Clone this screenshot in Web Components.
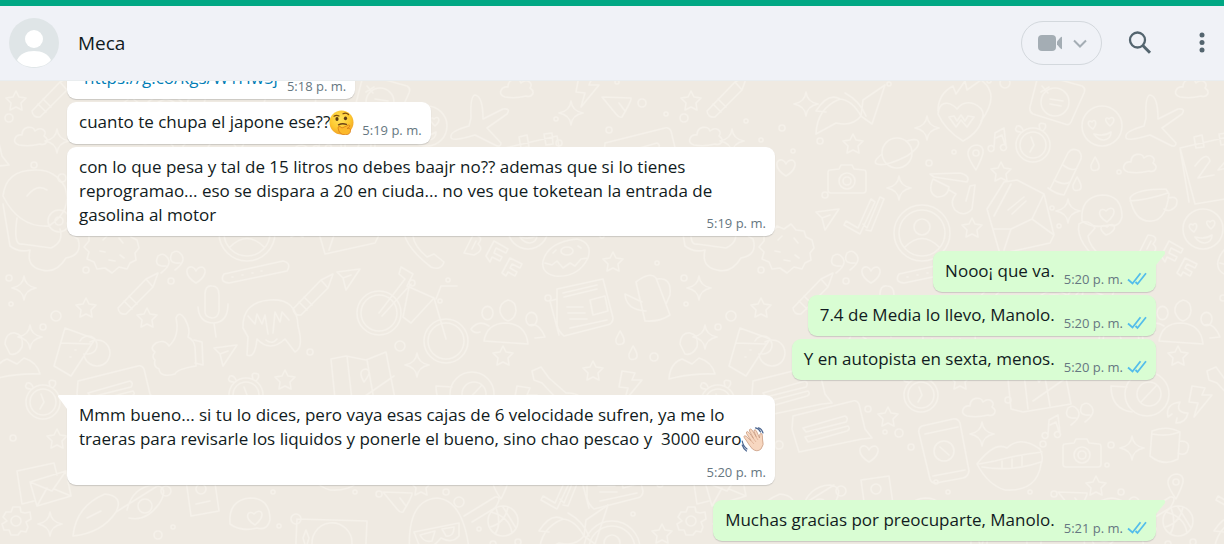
<!DOCTYPE html>
<html lang="es">
<head>
<meta charset="utf-8">
<title>Meca</title>
<style>
html,body{height:100%}
body{margin:0;font-family:"Open Sans","Noto Sans",sans-serif;color:#111b21;overflow:hidden}
</style>
</head>
<body>
<chat-window>
  <chat-header slot="header" name="Meca"></chat-header>
  <chat-message time="5:18 p. m."><a class="preview-link" href="#" style="color:#027eb5;text-decoration:none;margin-left:5px">https://g.co/kgs/W1Hw5j</a></chat-message>
  <chat-message time="5:19 p. m.">cuanto te chupa el japone ese??<chat-emoji name="thinking"></chat-emoji></chat-message>
  <chat-message time="5:19 p. m.">con lo que pesa y tal de 15 litros no debes baajr no?? ademas que si lo tienes reprogramao... eso se dispara a 20 en ciuda... no ves que toketean la entrada de gasolina al motor</chat-message>
  <chat-message out tail time="5:20 p. m.">Nooo¡ que va.</chat-message>
  <chat-message out time="5:20 p. m.">7.4 de Media lo llevo, Manolo.</chat-message>
  <chat-message out time="5:20 p. m.">Y en autopista en sexta, menos.</chat-message>
  <chat-message tail time="5:20 p. m.">Mmm bueno... si tu lo dices, pero vaya esas cajas de 6 velocidade sufren, ya me lo traeras para revisarle los liquidos y ponerle el bueno, sino chao pescao y  3000 euro<chat-emoji name="wave"></chat-emoji></chat-message>
  <chat-message out tail time="5:21 p. m.">Muchas gracias por preocuparte, Manolo.</chat-message>
</chat-window>
<script>
class ShadowElement extends HTMLElement {
  connectedCallback() {
    if (!this.shadowRoot) this.attachShadow({mode: 'open'}).innerHTML = this.render();
  }
}

customElements.define('chat-window', class extends ShadowElement {
  render() {
    return `<style>
      :host{display:flex;flex-direction:column;height:100vh;border-top:6px solid #00a884;box-sizing:border-box}
      main{position:relative;flex:1;min-height:0;overflow:hidden;background:#efeae2;display:flex}
      chat-wallpaper{position:absolute;inset:0}
      section{position:relative;flex:1;min-width:0;display:flex;flex-direction:column;justify-content:flex-end;gap:3px;padding:0 68px 3px 67px}
    </style>
    <slot name="header"></slot>
    <main><chat-wallpaper></chat-wallpaper><section><slot></slot></section></main>`;
  }
});

customElements.define('chat-header', class extends ShadowElement {
  render() {
    return `<style>
      :host{display:block;background:#f0f2f7;border-bottom:1px solid #e9edef}
      header{display:flex;align-items:center;height:74px;padding:0 7px 0 9px}
      h1{flex:1;margin:0 0 0 19px;font-size:19px;font-weight:400;line-height:26px}
      button{display:flex;align-items:center;justify-content:center;border:0;background:none;padding:0;color:#54656f}
      .call{width:81px;height:44px;box-sizing:border-box;border:1px solid #d3d8dd;border-radius:22px;color:#a4adb4;gap:10px;margin-right:23px}
      .search{margin-right:32px}
      svg{display:block}
    </style>
    <header>
      <svg width="50" height="50" viewBox="0 0 50 50" role="img" aria-label="Foto de perfil"><defs><clipPath id="c"><circle cx="25" cy="25" r="25"/></clipPath></defs><g clip-path="url(#c)"><rect width="50" height="50" fill="#dfe5e7"/><circle cx="25" cy="21" r="9" fill="#fff"/><path d="M8 42C11 36 17 33 25 33S39 36 42 42C38 47 32 49 25 49S12 47 8 42Z" fill="#fff"/></g></svg>
      <h1>${this.getAttribute('name')}</h1>
      <button class="call" aria-label="Videollamada">
        <svg width="26" height="18" viewBox="0 0 26 18" fill="currentColor"><rect x="1" y="1" width="18" height="16" rx="4"/><path d="M20 7.500L23 4Q25 2 25 3.500V14.500Q25 16 23 14L20 10.500Z"/></svg>
        <svg width="14" height="9" viewBox="0 0 14 9" fill="none" stroke="currentColor" stroke-width="2"><path d="M1 1.500L7 7.500L13 1.500"/></svg>
      </button>
      <button class="search" aria-label="Buscar"><svg width="30" height="30" viewBox="0 0 30 30" fill="none" stroke="currentColor"><circle cx="12.500" cy="12" r="7.500" stroke-width="2.300"/><path d="M17.800 17.500L25 24.700" stroke-width="3"/></svg></button>
      <button aria-label="Menú"><svg width="30" height="30" viewBox="0 0 30 30" fill="currentColor"><circle cx="15" cy="7" r="2.500"/><circle cx="15" cy="14.500" r="2.500"/><circle cx="15" cy="22" r="2.500"/></svg></button>
    </header>`;
  }
});

customElements.define('chat-message', class extends ShadowElement {
  render() {
    const out = this.hasAttribute('out');
    const tail = out ? 'M0 0H8Q10 1 9 3L0 14Z' : 'M9 0H1Q-1 1 1 3L9 14Z';
    return `<style>
      :host{display:flex;flex:none;--bubble:#fff}
      :host([out]){justify-content:flex-end;--bubble:#d9fdd3}
      :host([tail]){margin-top:12px}
      .bubble{position:relative;display:flow-root;max-width:65%;box-sizing:border-box;padding:8px 9px 9px 12px;border-radius:9px;background:var(--bubble);box-shadow:0 1px 1px rgba(11,20,26,.16);font-size:17px;line-height:24px;white-space:pre-wrap}
      :host([tail]) .bubble{border-top-left-radius:0}
      :host([out][tail]) .bubble{border-top-left-radius:9px;border-top-right-radius:0}
      .tail{position:absolute;top:0;right:100%;fill:var(--bubble)}
      :host([out]) .tail{right:auto;left:100%}
      .meta{float:right;display:flex;align-items:center;gap:4px;margin:8px 0 -8px 9px;font-size:13px;line-height:24px;color:#667781;white-space:nowrap}
      .ticks{color:#53bdeb}
    </style>
    <div class="bubble">${this.hasAttribute('tail') ? `<svg class="tail" width="9" height="14" viewBox="0 0 9 14" aria-hidden="true"><path d="${tail}"/></svg>` : ''}<slot></slot><span class="meta"><time>${this.getAttribute('time')}</time>${out ? '<svg class="ticks" width="20" height="14" viewBox="0 0 20 14" fill="none" stroke="currentColor" stroke-width="1.800" role="img" aria-label="Leído"><path d="M1 7.500L5.500 11.500L13.500 1.200M8.500 10L10.500 12L19 1.200"/></svg>' : ''}</span></div>`;
  }
});

customElements.define('chat-emoji', class extends ShadowElement {
  render() {
    const art = {
      thinking: `<defs><radialGradient id="g" cx=".45" cy=".35" r=".7"><stop offset="0" stop-color="#ffe45c"/><stop offset=".6" stop-color="#fdc82f"/><stop offset="1" stop-color="#ee9a25"/></radialGradient></defs>
        <circle cx="12.500" cy="12.500" r="12" fill="url(#g)"/>
        <ellipse cx="8" cy="9" rx="1.600" ry="1.900" fill="#5b3a13"/><ellipse cx="16.500" cy="8.300" rx="1.600" ry="1.900" fill="#5b3a13"/>
        <path d="M5 6.200Q7.500 4.500 10 6M14 3.800Q17 2 19.500 4.500" fill="none" stroke="#7a4a12" stroke-width="1.200" stroke-linecap="round"/>
        <path d="M9.500 14.800Q13 13 17.500 14.300" fill="none" stroke="#6b4216" stroke-width="1.300" stroke-linecap="round"/>
        <path d="M9 18Q9 16 11 16.500L13 18L19.500 15Q21.500 15 20.500 16.800L18 18.500Q22 18 21.500 20.500Q21.500 24.500 16.500 24.800Q10 25 9 18Z" fill="#fcb92b" stroke="#d97b18" stroke-width=".8"/>`,
      wave: `<g fill="#f7d7c0" stroke="#c99c82" stroke-width=".8" stroke-linejoin="round"><path d="M5 13Q2 9.500 3.500 8.800Q5 8 8 12L10 13.500L5.500 6.500Q5 4.500 6.500 4.500Q7.500 4.500 12.500 11.500L8.500 4Q8 2 9.800 2Q11 2.300 15.200 9.800L13 4.500Q12.800 2.500 14.300 2.800Q15.300 3 18.500 11L18.800 7.500Q19.500 5.500 21 7Q21.500 8 21.500 12Q23.500 18 20 22Q16 25.500 11.500 22Q9 19.500 5 13Z"/></g>
        <path d="M9 12.500L13 17M12 11L15 15M15 9.800L17 13" stroke="#dcaf94" stroke-width=".8" fill="none"/>
        <path d="M14.500 .8Q18 1.500 19.500 5M17.500 .8Q21 2 22 6M1.200 14Q2 19 6 22M1.200 18Q2.500 22 5.500 24" fill="none" stroke="#4d6791" stroke-width="1.200" stroke-linecap="round"/>`
    };
    const labels = {thinking: 'Cara pensativa', wave: 'Mano saludando'};
    const name = this.getAttribute('name');
    return `<style>:host{display:inline-block;width:25px;height:25px;margin:0 -1px;vertical-align:-7px;white-space:normal}svg{display:block}</style>
      <svg width="25" height="25" viewBox="0 0 25 25" role="img" aria-label="${labels[name]}">${art[name]}</svg>`;
  }
});

/* Doodle wallpaper: line drawings placed on a tile 675 units wide that repeats sideways. */
const DOODLES = {
  star: 'M0-10L3-4L10-3L5 2L6 9L0 6L-6 9L-5 2L-10-3L-3-4Z',
  spark: 'M0-12Q1-2 12 0Q1 2 0 12Q-1 2-12 0Q-1-2 0-12Z',
  heart: 'M0 8C-13 0-10-9-4-8Q-1-7 0-4Q2-8 6-8C12-6 9 3 0 8Z',
  cloud: 'M-12 8C-20 6-16-3-9-2C-9-11 2-12 4-6C10-11 17-6 13-1C19 3 15 9 9 7Q-2 10-12 8Z',
  camera: 'M-17-9L-8-10L-6-14H5L7-10L17-9Q19-9 19-6V11Q19 14 16 14H-16Q-19 14-19 11V-6Q-19-9-17-9ZM8 2A8 8 0 1 1-8 2A8 8 0 1 1 8 2ZM4 2A4 4 0 1 1-4 2A4 4 0 1 1 4 2',
  smile: 'M20 0A20 20 0 1 1-20 0A20 20 0 1 1 20 0ZM-9 3C-17-2-13-7-10-4C-7-8-4-3-9 3ZM8 0C1-6 4-10 7-7C11-11 15-6 8 0ZM-8 8Q2 11 9 6Q9 13 2 14Q-4 14-8 8Z',
  clock: 'M17 0A17 17 0 1 1-17 0A17 17 0 1 1 17 0ZM13 0A13 13 0 1 1-13 0A13 13 0 1 1 13 0ZM-2-8L1 0L-3 7M-12-13Q-20-13-16-19Q-12-20-10-15M7-16Q4-24 12-21Q14-18 10-14',
  user: 'M28 0A28 28 0 1 1-28 0A28 28 0 1 1 28 0ZM23 0A23 23 0 1 1-23 0A23 23 0 1 1 23 0ZM8-6A8 8 0 1 1-8-6A8 8 0 1 1 8-6ZM-17 14Q0-3 17 14',
  plane: 'M-4-8Q-5-30 0-31Q8-30 8-7L28-17Q36-18 32-12L12 2L26 17Q26 22 20 19L0 9Q-26 17-24 10Q-24 5-6 0Z',
  saturn: 'M15 0A15 15 0 1 1-15 0A15 15 0 1 1 15 0ZM-15 1Q-25 9-20 11Q-12 14 10 3Q26-8 20-13Q17-14 10-12',
  check: 'M-17 5L-5 12L8-17L12-14L-3 18L-19 9ZM0 8L4 12L17-19L21-17L8 15L3 14',
  arrow: 'M-11-6L12-9L-2 12L-5 0ZM-5 0L3-3',
  flame: 'M-25-2C-23-20-9-11-6-7C3-20 22-10 20 0Q17 16 0 25Q-18 14-25-2ZM-25-5Q-25-22-10-30L-7-22L2-35L4-26L18-36Q38-22 18 5M-14 1L-7 11L-2 4L4 11L11 1L5 0L2 5L-2-1L-6 5L-9 0Z',
  note: 'M-4 8A3 3 0 1 1-4 7L-3-8L6-13L8 5A3 3 0 1 1 7 4L4-6L-2-3',
  pin: 'M0 13Q-9 0-8-5Q-6-12 1-12Q8-11 7-4Q6 1 0 13ZM3-4A3 3 0 1 1-3-4A3 3 0 1 1 3-4',
  glasses: 'M-25-14L5-15Q16-12 12-6L-21-11ZM-22-9Q-28 5-18 9Q-7 9-6-1ZM-6 2L1 6Q-6 14 0 22Q9 30 17 21L20-3L15-2L11 13',
  envelope: 'M-33-5L-16-32L-3-34L24-20L34 21L30 29L-20 40ZM-27 15H-9L12 5L34 21M-9 15L-16 36M-26 2L-9-30M24-20L12 5M-12-4L4-17M-8 0L6-13',
  calc: 'M-25-24L25-10Q29-8 27-3L14 26Q12 30 8 28L-24 18Q-28 16-27 11L-18-24M12 6A14 14 0 1 1-16 6A14 14 0 1 1 12 6M-7 3L6 5M-7 8L4 10M-16-4L-8-9M-15-10L-9-3',
  spray: 'M-12 18L6-18Q10-24 17-20Q21-15 18-10L2 24Q-6 23-14 17ZM-8 9Q2 15 8 11M1-6Q10 1 15-3',
  drop: 'M0-7Q7 4 2 6Q-5 8-4 1Z',
  cup: 'M-22-6Q-17-15 14-15L17-10Q14 16 0 17Q-17 19-22-6ZM-22-3Q-5-4 16-11M16-6Q28-9 24 2Q18 9 12 5',
  calendar: 'M-30-20L22-32L33 28L-15 36ZM-30-20L-21 34M-16-31L-8-33L-6-21L-14-20ZM9-34L17-35L18-24L11-23ZM-15-2Q-3-18 0-7L-12 10L4 7M20-12L8 2L22-1M18-8V9',
  rocket: 'M-24 26Q-23 0 0-9Q12-8 21 8Q12 19-4 15ZM-14 4L-24 3Q-12-16 0-9M5-15Q20-7 26 8M21 8L32 16L45-23L23-8Z',
  bolt: 'M-8-15L5-13L2-6H12L-6 16L-2 2L-11 1Z',
  tri: 'M-15-9L14-8Q15-6 5 11Q2 12-1 8ZM2-3L8 5',
  speech: 'M-35-5L25-20Q29-21 31-17L37 8L44 17L34 18L-29 31L-36 8ZM-25 7L17-5Q21-3 18 1L-22 11ZM-23 16L20 5Q23 8 19 10L-20 21Z',
  dog: 'M-34-5Q-31-32 0-31Q18-31 28-14Q36 9 12 25Q-18 27-34-5ZM-10-5Q0-18 10-11M-34 3L-27 45Q-18 52-7 49Q-11 66 5 69Q19 73 29 57Q46 54 41 38Q32 34 30 22M-20 17Q-24 45-15 43L14 47Q27 41 23 28M33 20A11 11 0 1 1 11 20A11 11 0 1 1 33 20M26 20A4 4 0 1 1 18 20A4 4 0 1 1 26 20',
  cookie: 'M27 0L23 5L24 12L18 15L15 21L7 19L0 25L-7 20L-15 21L-18 14L-25 11L-23 4L-28-1L-23-7L-23-14L-15-15L-10-22L-3-19L4-24L9-18L17-17L19-11L25-8ZM-9-8L-5-12M7-10L11-5M-12 3L-7 4M8 7L12 10M-3 12L3 13',
  quotes: 'M-4 4Q-17 5-12-6Q-7-10-3-5Q3 2-9 11M10 1Q-3 2 2-9Q7-13 11-8Q17-1 5 8',
  pencil: 'M-20 15L8-14L20-20L15-6L-12 21Q-19 22-20 15ZM-14 8L-6 16M-9 3L-1 11M8-14L15-6',
  mic: 'M-7-14Q-7-24 0-23Q7-23 7-14V2Q6 9 0 9Q-8 8-7 1ZM-14-2Q-13 14 2 14Q16 13 16-5M2 14L4 28',
  thumb: 'M-8 3Q3-7-1-25Q2-33 8-24Q14-13 11-6Q17-3 18 4L19 23Q0 26-2 31Q-17 35-18 26Q-24 24-22 17Q-26 14-22 9Q-28 5-21 0Q-12-4-8 3ZM17-3L25-1L26 22L18 20',
  monkey: 'M-27 0Q-28-26 0-28Q27-30 28-2Q34 20 25 24L15 11Q0 25-13 11Q-15 31-23 27L-22 9ZM-22-12L-15-4L-13-14L-8-4L-5-13L-2 6M3 5L5-16L10-6L12-16L19-8M-4 12Q2 17 7 11',
  bar: 'M-31 2L28-11Q37-9 32-1L-26 11Q-36 10-31 2ZM-23 5H-22M-13 3H-12M-3 1H-2M6-1H7',
  wheel: 'M22 0A22 22 0 1 1-22 0A22 22 0 1 1 22 0ZM18 0A18 18 0 1 1-18 0A18 18 0 1 1 18 0Z',
  frame: 'M0 0L26-34L20-39L22-46M22-46L34-39L28-27L55-15L32 10L24 4L30-26M55-15L67 26M57-14L62-27L78-27M3 3L32-29',
  glass: 'M-10-23L20-12L-4 25L-21 15ZM-14-8L16-7M15-9A13 13 0 1 1 9 3M5-10A9 9 0 1 1 12 3M0-1H1M-5 6H-4',
  person: 'M-10-22Q-9-34 0-33Q9-31 7-19Q2-10-5-12ZM-21 13Q-20-3-8-7L2-2L9-8Q22-4 25 8Q1 7-21 13Z',
  people: 'M8-15Q8-25 0-26Q-9-23-8-14Q-5-6 0-5Q7-7 8-15ZM-24 15Q-21-3-2-3Q18-2 20 18ZM-15-13A5 6 0 1 1-26-13A5 6 0 1 1-15-13M29-7A5 6 0 1 1 18-7A5 6 0 1 1 29-7M-28 6Q-34 8-37 3Q-29-7-19 0M27 12L37 11Q31-4 21-1',
  map: 'M-31-15L-16-18L4-14L24-22L34 30L-14 38L-26 35ZM-15-18L-9 35M5-14L13 32M2 8Q-5-4 4-5Q11-3 2 8M-4 27L32 2',
  phonecall: 'M-23-27Q-27-8 4 16Q14 20 17 11L7 3L0 6Q-13-5-14-15L-7-23Q-14-33-23-27ZM4-16C-5-23 0-28 5-24C12-31 18-21 4-16Z',
  bff: 'M-26-8L-17-26Q-5-25-12-17Q-5-11-16-6ZM-18-12L-14-20M-4-5L4-20L18-12L16-8L6-13L4-8L12-4L10 0L2-4L0 1ZM12 12L20-3L32 3L30 7L22 3L20 7L27 11L25 15L18 11L16 15Z',
  donut: 'M-24 5Q-19-14 10-17Q26-13 21 2Q11 22-12 20Q-26 17-24 5ZM6-5A6 4 0 1 1-6-5A6 4 0 1 1 6-5M-22 7L-15 9L-10 5L-4 12L3 7L8 10L14 3L21 2M-14-3L-11-6M11-10L14-8',
  news: 'M-25-19L21-29L31 10Q31 16 25 17L-18 28Q-24 23-25 17ZM-25-9L-32-7L-23 27M-19-15L15-23M-18-11L15-19M-15-1H1M-14 5H3M-12 11H5M8-8L23-12L26 3L11 7ZM-12 20L25 12',
  can: 'M-14-16Q0-27 6-20L20 17Q10 24-5 23ZM-8 4L-25-4Q-24 12-4 13M7-19Q22-21 20-3L16 6',
  guitar: 'M-25-20L-16-24L-8-13L9 2Q27 1 27 18Q12 23 0 25Q-11 17 0 8L-15-8L-23-11Z',
  helmet: 'M22 0A22 22 0 1 1-22 0A22 22 0 1 1 22 0ZM14 0A12 12 0 1 1-10 0A12 12 0 1 1 14 0ZM-20-7L-36-8Q-36 15-15 18M-6 8L10-9',
  moon: 'M-9 4Q-12-9 3-11Q-2 0 11 0Q9 10-1 10M-9 4L-5 1M-1 10L0 5',
  phone: 'M-23-25L8-32Q13-33 15-28L24 20Q23 26 18 27L-9 32Q-14 32-15 28L-26-18Q-27-23-23-25ZM-20-17L13-24M-12 25L20 19M9 0A10 10 0 1 1-11 0A10 10 0 1 1 9 0M-5-4L4 4',
  lips: 'M-33 0Q-15-23-3-16Q10-29 30-15Q34-5 31 0Q27 28-5 26Q-22 21-33 0ZM-31 0L-15-3Q6-9 32-12M-28 3Q2 8 31-2M-8-3V4M2-5V4M12-8V2',
  mug: 'M-15-15Q0-21 13-14L11 13Q-3 21-17 10ZM-15-12Q0-9 13-14M13-5Q25-5 20 6Q17 10 11 7',
  gear: 'M-3-14H4L5-9L9-8L14-9L15-2L10 1L12 6L10 11L5 10L2 14H-5L-7 9L-12 9L-14 3L-9 0L-13-4L-10-9L-5-9ZM5 0A5 5 0 1 1-5 0A5 5 0 1 1 5 0',
  letter: 'M-26-12L11-20L14-8M-26-12L-21 21L-9 18M-13-1L23-12L28 13L-6 23ZM-13-1L9 8L23-12M-6 23L4 5M28 13L11 6',
  ship: 'M-22 22Q-19-8 10-20Q29-18 21-2Q7 19-22 22ZM32-4Q38-28 60-29Q75-27 64-10Q51 8 34 4M21-2L64-29M57-8A7 7 0 1 1 43-8A7 7 0 1 1 57-8M-8 4L6-3',
  card: 'M-16-18L12-22L17 13L-11 18ZM4-9A5 5 0 1 1-6-9A5 5 0 1 1 4-9M-6 6L8 3',
  face: 'M-20 10Q-22-14 0-16Q20-16 20 6Q17 17 7 14Q-9 18-20 10ZM5 11C-8 3-1-5 4 0C10-7 18 0 5 11Z',
  picture: 'M-40-15L30-13L28 30M-40-15L-42 30M15 10A20 20 0 1 0-24 15M-34 4L-31-4L-28 4L-31 14Z',
  cool: 'M-27 30Q-32-28 0-30Q28-28 33 30M-23 4L22-5V8Q15 16 4 10Q-8 25-18 17ZM-17 7L-2 3L-5 13Q-13 15-17 7ZM5 1L17-1Q17 9 9 8ZM27-12L58-31Q66-32 58-20L35-6',
  ball: 'M15 0A15 15 0 1 1-15 0A15 15 0 1 1 15 0ZM-12-9Q7-4 9 12M-13 6Q2 2 5-14M-7-13Q-1 3-8 13M0-14L13 7'
};
const PLACES = `spark 131 103,rocket 165 107,star 178 143,saturn 222 152,camera 172 178,check 188 215,arrow 152 217,user 247 232,spark 224 187,spark 252 127,flame 288 115,glasses 280 187,pin 301 156,note 323 140,star 326 171,clock 358 144,envelope 345 213,calc 382 95,spray 387 170,smile 427 125,drop 420 163,drop 402 183,cloud 465 163,cloud 517 88,cup 477 203,spark 393 210,calendar 535 167,face 427 210,smile 528 228,star 297 227,plane 475 125,spark 571 112,tri 617 105,speech 640 147,star 16 100,pencil 52 95,cloud 31 136,bolt 587 90,spark 57 140,dog 37 200,cookie 112 247,quotes 170 261,heart 196 274,pencil 138 292,star 86 307,star 147 317,mic 212 308,thumb 177 342,monkey 270 327,bar 255 271,pencil 313 293,arrow 348 277,wheel 379 312,wheel 446 340,frame 379 312,glass 75 350,spark 30 336,spark 24 287,person 15 365,arrow 225 353,speech 113 385,map 362 373,star 285 379,clock 246 394,clock 43 401,phonecall 427 250,bff 490 260,donut 567 255,star 613 261,people 508 325,news 582 307,can 650 297,drop 620 337,drop 633 352,star 503 355,star 593 370,spark 417 364,guitar 557 390,helmet 472 393,bolt 630 385,heart 111 167,speech 153 420,star 213 416,cloud 304 407,quotes 405 413,bolt 525 400,moon 502 412,phone 270 450,spark 307 433,note 377 427,lips 335 463,camera 407 452,spark 457 447,mug 492 445,heart 194 453,pin 501 485,star 421 485,ball 503 520,star 57 438,letter 43 482,gear 16 520,spark 50 523,ship 95 513,card 202 497,face 250 513,picture 337 533,tri 398 500,cool 437 527,rocket 563 527,user 612 548,check 560 490,news 612 480,star 662 533`
  .split(',').map(p => p.split(' ')).map(([n, x, y]) => [n, +x, +y - 80]);

customElements.define('chat-wallpaper', class extends ShadowElement {
  render() {
    const big = {star: 13, spark: 12, heart: 12, drop: 8, note: 14, arrow: 15, quotes: 16, moon: 14, pin: 14, tri: 16, bolt: 16, cloud: 19, ball: 18, gear: 18, smile: 23, wheel: 25, camera: 23};
    let seed = 7;
    const next = () => (seed = (seed * 16807) % 2147483647) / 2147483647;
    const dots = [];
    for (let i = 0; i < 5000 && dots.length < 270; i++) {
      const x = 5 + Math.floor(next() * 665), y = Math.floor(next() * 900), r = [2, 2, 3, 3, 4, 5][Math.floor(next() * 6)];
      if (PLACES.every(([n, a, b]) => Math.hypot(a - x, b - y) > (big[n] || 29) + r) && dots.every(d => Math.hypot(d[0] - x, d[1] - y) > 13)) dots.push([x, y, r]);
    }
    return `<style>:host{display:block}svg{display:block;width:100%;height:100%}</style>
      <svg aria-hidden="true"><defs><pattern id="tile" width="675" height="1000" patternUnits="userSpaceOnUse"><g fill="none" stroke="#f5f1ea" stroke-width="1.600" stroke-linejoin="round" stroke-linecap="round">
      ${PLACES.map(([n, x, y]) => [x, x - 675, x + 675].filter(v => v > -80 && v < 755).map(v => `<path transform="translate(${v} ${y})" d="${DOODLES[n]}"/>`).join('')).join('')}
      ${dots.map(([x, y, r]) => `<circle cx="${x}" cy="${y}" r="${r}"/>`).join('')}
      </g></pattern></defs><rect width="100%" height="100%" fill="url(#tile)"/></svg>`;
  }
});
</script>
</body>
</html>
